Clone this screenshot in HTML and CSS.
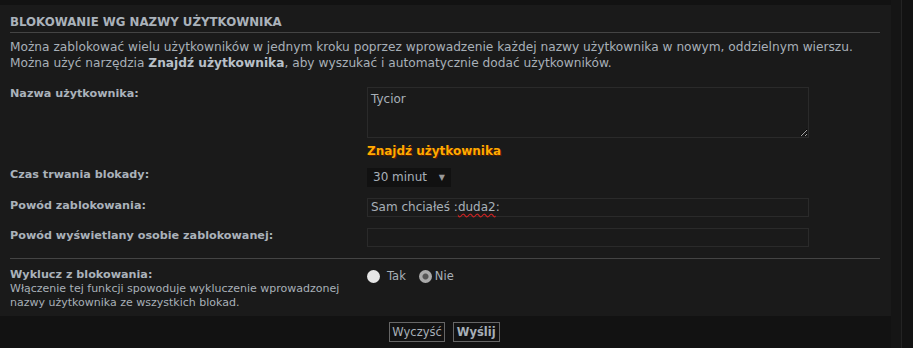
FILE: index.html
```html
<!DOCTYPE html>
<html lang="pl">
<head>
    <meta charset="UTF-8">
    <title>Blokowanie wg nazwy użytkownika</title>
    <link rel="stylesheet" href="styles.css">
</head>
<body>
    <div class="page">
        <div class="main">
            <form class="panel">
                <h3 class="panel-title">Blokowanie wg nazwy użytkownika</h3>
                <p class="intro">Można zablokować wielu użytkowników w jednym kroku poprzez wprowadzenie każdej nazwy użytkownika w nowym, oddzielnym wierszu.<br>Można użyć narzędzia <strong>Znajdź użytkownika</strong>, aby wyszukać i automatycznie dodać użytkowników.</p>

                <div class="row row-name">
                    <label class="label">Nazwa użytkownika:</label>
                    <div class="field">
                        <textarea class="textbox" rows="3">Tycior</textarea>
                        <a class="find-user">Znajdź użytkownika</a>
                    </div>
                </div>

                <div class="row">
                    <label class="label">Czas trwania blokady:</label>
                    <div class="field">
                        <div class="select">30 minut <span class="arrow">▼</span></div>
                    </div>
                </div>

                <div class="row">
                    <label class="label label-input">Powód zablokowania:</label>
                    <div class="field">
                        <div class="input">Sam chciałeś :<span class="typo">duda2</span>:</div>
                    </div>
                </div>

                <div class="row">
                    <label class="label label-input">Powód wyświetlany osobie zablokowanej:</label>
                    <div class="field">
                        <div class="input"></div>
                    </div>
                </div>

                <hr class="divider">

                <div class="row row-exclude">
                    <div class="label">
                        Wyklucz z blokowania:
                        <span class="explain">Włączenie tej funkcji spowoduje wykluczenie wprowadzonej nazwy użytkownika ze wszystkich blokad.</span>
                    </div>
                    <div class="field radios">
                        <span class="radio"></span> Tak
                        <span class="radio checked"></span> Nie
                    </div>
                </div>
            </form>

            <div class="buttons">
                <button class="btn">Wyczyść</button>
                <button class="btn btn-main">Wyślij</button>
            </div>
        </div>
        <div class="side"></div>
    </div>
</body>
</html>
```

FILE: styles.css
```css
body {
    margin: 0;
    background-color: #121212;
    font-family: 'DejaVu Sans', Verdana, sans-serif;
    font-size: 12px;
    color: #a8b0b8;
}

.page {
    display: flex;
    height: 348px;
    overflow: hidden;
}

.main {
    width: 891px;
    padding-top: 5px;
}

.side {
    width: 10px;
    background-color: #151515;
    border-right: 1px solid #232323;
}

.panel {
    background-color: #1a1a1a;
    padding: 10px 11px 6px 10px;
}

.panel-title {
    margin: 0;
    padding-bottom: 3px;
    border-bottom: 1px solid #444;
    font-size: 11.8px;
    line-height: 14px;
    font-weight: bold;
    text-transform: uppercase;
    color: #aab2ba;
}

.intro {
    margin: 6px 0 16px;
    font-size: 12.2px;
    line-height: 16px;
    white-space: nowrap;
}

.intro strong {
    color: #b8c0c8;
}

.row {
    display: flex;
    margin-bottom: 11px;
    line-height: 14px;
}

.row-name {
    margin-bottom: 10px;
}

.label {
    width: 357px;
    font-size: 11.2px;
    font-weight: bold;
    color: #aab2ba;
}

.label-input {
    padding-top: 1px;
}

.field {
    flex: 1;
    padding-right: 71px;
}

.textbox {
    display: block;
    box-sizing: border-box;
    width: 100%;
    height: 51px;
    margin: 0;
    padding: 4px 3px;
    background-color: #1a1a1a;
    border: 1px solid #2a2a2a;
    color: #a8b0b8;
    font-family: inherit;
    font-size: 12px;
    line-height: 14px;
    resize: vertical;
}

.find-user {
    display: block;
    margin-top: 6px;
    font-weight: bold;
    color: #ffaa00;
    text-shadow: 1px 1px 0 #5a1a00;
}

.select {
    position: relative;
    box-sizing: border-box;
    width: 84px;
    height: 19px;
    line-height: 19px;
    padding-left: 6px;
    background-color: #111;
}

.arrow {
    position: absolute;
    right: 6px;
    font-size: 8px;
    color: #999;
}

.input {
    box-sizing: border-box;
    height: 19px;
    line-height: 17px;
    padding: 0 3px;
    border: 1px solid #2a2a2a;
}

.typo {
    text-decoration: underline wavy #c22;
    text-underline-offset: 2px;
}

.divider {
    border: 0;
    border-top: 1px solid #444;
    margin: 1px 0 9px;
}

.row-exclude {
    margin-bottom: 0;
}

.explain {
    display: block;
    max-width: 345px;
    font-size: 11px;
    font-weight: normal;
    line-height: 14px;
    color: #a8b0b8;
}

.radios {
    display: flex;
    align-items: center;
    gap: 7px;
    align-self: flex-start;
    padding-top: 1px;
    font-size: 11.5px;
}

.radio {
    width: 13px;
    height: 13px;
    border-radius: 50%;
    background-color: #e6e6e6;
}

.radio.checked {
    margin-left: 6px;
    margin-right: -4px;
    background: radial-gradient(circle, #555 0 2.5px, #aaa 3.5px);
}

.buttons {
    display: flex;
    justify-content: center;
    gap: 8px;
    padding-top: 6px;
    padding-left: 0;
    padding-right: 2px;
}

.btn {
    height: 20px;
    padding: 0 2px;
    background-color: #121212;
    border: 1px solid #666;
    color: #a8b0b8;
    font-family: inherit;
    font-size: 11.5px;
}

.btn-main {
    font-weight: bold;
    padding: 0 3px;
}
```
